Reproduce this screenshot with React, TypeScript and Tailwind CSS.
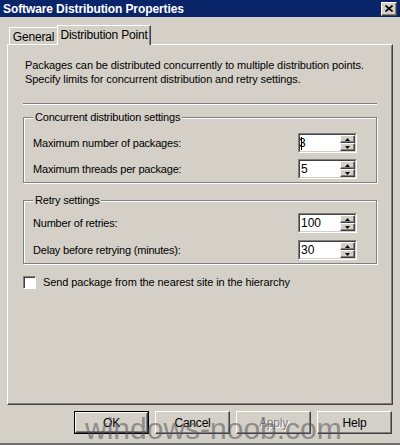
import React from "react";

const raised =
  "border border-t-white border-l-white border-b-[#404040] border-r-[#404040] shadow-[inset_-1px_-1px_0_#808080]";

function Arrow({ up }: { up?: boolean }) {
  return (
    <svg width="5" height="3" viewBox="0 0 5 3">
      {up ? <path d="M2.5 0 L5 3 L0 3 Z" fill="#000" /> : <path d="M0 0 L5 0 L2.5 3 Z" fill="#000" />}
    </svg>
  );
}

function Spinner({ value, cursor }: { value: string; cursor?: boolean }) {
  return (
    <div className="flex h-[20px] w-[59px] border border-t-[#808080] border-l-[#808080] border-b-white border-r-white">
      <div className="flex flex-1 border border-t-[#404040] border-l-[#404040] border-b-[#d4d0c8] border-r-[#d4d0c8] bg-white">
        <span className="flex flex-1 items-center pl-[1px] text-[12px] leading-[16px] tracking-normal">
          {cursor && <span className="mr-[-3px] h-[13px] w-[1px] bg-black" />}
          {value}
        </span>
        <div className="flex w-[15px] flex-col">
          <div className={`flex flex-1 items-center justify-center bg-[#d4d0c8] ${raised}`}>
            <Arrow up />
          </div>
          <div className={`flex flex-1 items-center justify-center bg-[#d4d0c8] ${raised}`}>
            <Arrow />
          </div>
        </div>
      </div>
    </div>
  );
}

function Row({ label, value, cursor }: { label: string; value: string; cursor?: boolean }) {
  return (
    <div className="flex items-center justify-between">
      <span>{label}</span>
      <Spinner value={value} cursor={cursor} />
    </div>
  );
}

function Button({
  label,
  primary,
  disabled,
}: {
  label: string;
  primary?: boolean;
  disabled?: boolean;
}) {
  const inner = (
    <div
      className={`flex h-full w-full items-center justify-center bg-[#d4d0c8] ${raised} ${
        disabled ? "text-[#808080] [text-shadow:1px_1px_0_#fff]" : ""
      }`}
    >
      {label}
    </div>
  );
  return primary ? (
    <div className="h-[23px] w-[75px] border border-black">{inner}</div>
  ) : (
    <div className="h-[23px] w-[75px]">{inner}</div>
  );
}

export default function App() {
  return (
    <div className="relative flex h-[445px] w-[400px] flex-col overflow-hidden bg-[#d4d0c8] font-['Liberation_Sans',Arial,sans-serif] text-[11px] tracking-[-0.2px] text-black">
      {/* title bar */}
      <div className="flex h-[17px] items-center justify-between bg-[#0a246a] pl-[3px] pr-[3px]">
        <span className="text-[12px] font-bold tracking-[-0.1px] text-white">Software Distribution Properties</span>
        <div className={`flex h-[14px] w-[16px] items-center justify-center bg-[#d4d0c8] ${raised}`}>
          <svg width="8" height="7" viewBox="0 0 8 7">
            <path d="M0.5 0.5 L7.5 6.5 M7.5 0.5 L0.5 6.5" stroke="#000" strokeWidth="1.6" />
          </svg>
        </div>
      </div>

      {/* tabs */}
      <div className="flex flex-col px-[7px] pt-[8px]">
        <div className="relative z-10 flex h-[19px] items-end pl-[2px]">
          <div className="flex h-[17px] w-[49px] items-center justify-center border-l border-t border-r border-l-white border-t-white border-r-[#404040] pt-[1px] text-[12px]">
            General
          </div>
          <div className="-mb-px ml-[-1px] flex h-[20px] w-[94px] items-center justify-center border-l border-t border-r border-l-white border-t-white border-r-[#404040] bg-[#d4d0c8] pb-[2px] text-[12px] shadow-[inset_-1px_0_0_#808080]">
            Distribution Point
          </div>
        </div>

        {/* panel */}
        <div className="flex h-[361px] flex-col border border-t-white border-l-white border-b-[#404040] border-r-[#404040] px-[15px] shadow-[inset_-1px_-1px_0_#808080]">
          <p className="pl-[2px] pt-[13px] leading-[14px] tracking-[-0.1px]">
            Packages can be distributed concurrently to multiple distribution points.
            <br />
            Specify limits for concurrent distribution and retry settings.
          </p>

          <div className="mt-[17px] h-[2px] border-t border-b border-t-[#808080] border-b-white" />

          <fieldset className="mt-[5px] border border-[#808080] pb-[3px] pl-[9px] pr-[19px] pt-[9px] shadow-[1px_1px_0_#fff,inset_1px_1px_0_#fff]">
            <legend className="ml-[0px] bg-[#d4d0c8] px-[2px] leading-[14px]">
              Concurrent distribution settings
            </legend>
            <div className="flex flex-col gap-[6px]">
              <Row label="Maximum number of packages:" value="3" cursor />
              <Row label="Maximum threads per package:" value="5" />
            </div>
          </fieldset>

          <fieldset className="mt-[10px] border border-[#808080] pb-[3px] pl-[9px] pr-[19px] pt-[6px] shadow-[1px_1px_0_#fff,inset_1px_1px_0_#fff]">
            <legend className="ml-[0px] bg-[#d4d0c8] px-[2px] leading-[14px]">Retry settings</legend>
            <div className="flex flex-col gap-[7px]">
              <Row label="Number of retries:" value="100" />
              <Row label="Delay before retrying (minutes):" value="30" />
            </div>
          </fieldset>

          <div className="mt-[10px] flex items-center gap-[7px] tracking-[-0.1px]">
            <div className="h-[13px] w-[13px] border border-t-[#808080] border-l-[#808080] border-b-white border-r-white bg-white shadow-[inset_1px_1px_0_#404040]" />
            <span>Send package from the nearest site in the hierarchy</span>
          </div>
        </div>
      </div>

      {/* buttons */}
      <div className="mt-[6px] flex justify-end gap-[6px] pr-[8px] text-[12px]">
        <Button label="OK" primary />
        <Button label="Cancel" />
        <Button label="Apply" disabled />
        <Button label="Help" />
      </div>

      <div className="mt-auto h-[2px] bg-[#6e6e6e]" />

      {/* watermark */}
      <div className="pointer-events-none absolute left-[85px] top-[413px] text-[30px] leading-[32px] tracking-normal text-[#555] opacity-55">
        windows-noob.com
      </div>
    </div>
  );
}
